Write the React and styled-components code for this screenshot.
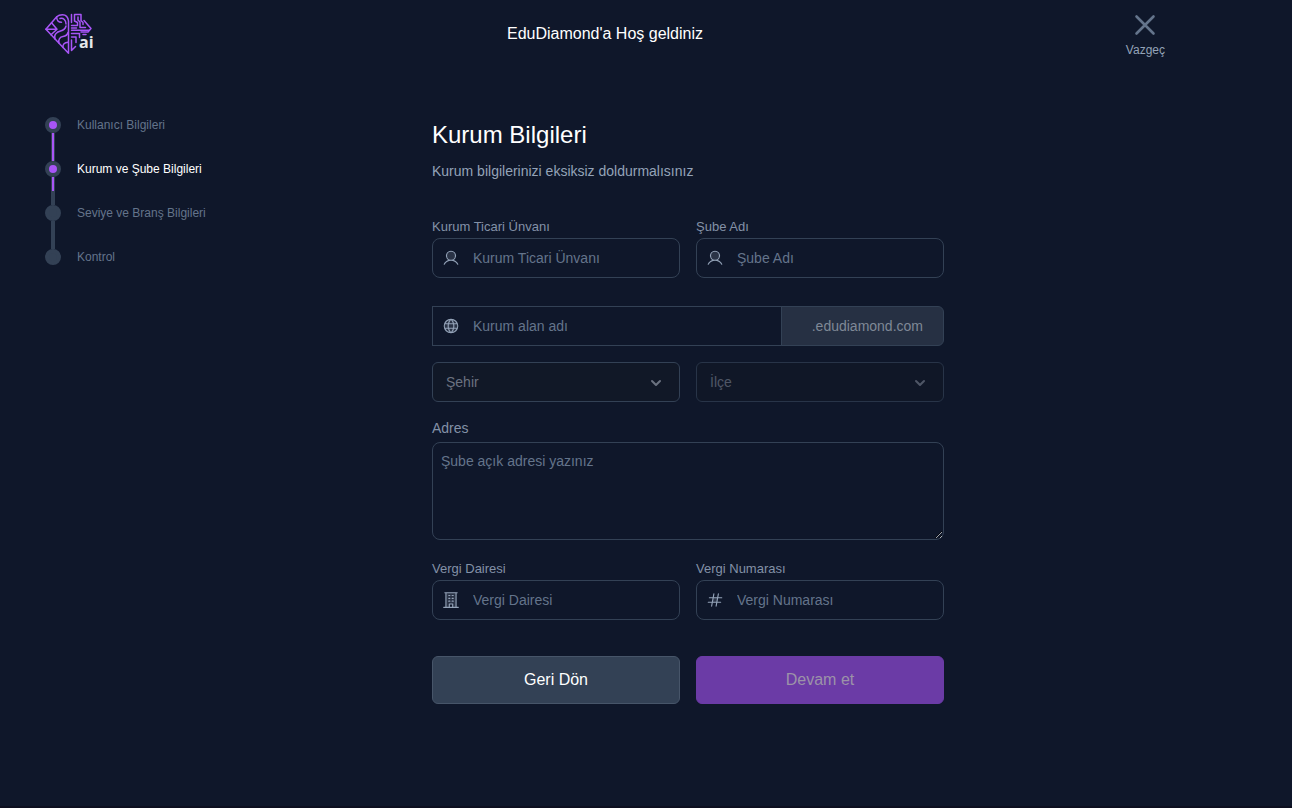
import React, { useState } from 'react'
import styled, { createGlobalStyle } from 'styled-components';
import { PiUserDuotone, PiGlobeDuotone, PiBuildingDuotone, PiHashDuotone } from 'react-icons/pi';
import { HiChevronDown } from 'react-icons/hi';


const steps = [
    { title: 'Kullanıcı Bilgileri', progress: 100, reached: true },
    { title: 'Kurum ve Şube Bilgileri', progress: 50, reached: true, current: true },
    { title: 'Seviye ve Branş Bilgileri', progress: 0 },
    { title: 'Kontrol' },
];

const Logo = () => (
    <LogoSvg viewBox="0 0 50 42" role="img" aria-label="EduDiamond ai">
        <g fill="none" stroke="#a855f7" strokeWidth="1.5" strokeLinejoin="round" strokeLinecap="round">
            {/* brain side */}
            <path d="M23.5 40.2V8C23 4 20.5 1.7 17.5 1.7C15 1.7 13 2.5 11.7 3.7L0.9 16.3L23.5 40.2" />
            <path d="M0.9 16.3H11.7M6.5 9.8L12 16.3L6 21.8M11.7 3.7C11.500 7.500 13.500 9.300 16.500 9.300M15 5.500C18.500 4.800 21 7 21 11" />
            <path d="M10 26C8.5 21.5 12 18.8 15.500 18C18.500 17.300 20.500 15.500 21 13M14 30C13 26.500 15 23.800 18 23.500C20.500 23.200 22.500 21.500 23 19.500M18 34.500C17.500 31.500 19.500 29.500 23 29.300" />
            {/* circuit side */}
            <path d="M26.5 1.5V9.5M26.5 12.5H32.5V9.5L29.5 8V1.5H36V7.5L38 9.5V11.5M33 4V7L35 9V14.500H40.500" />
            <path d="M39 7.5L46 15.5L43 19H36M26.5 15H31.5M26.5 17.3H44M26.5 20.5H34.5V24.5M38 21.5H41M26.5 24H31V29.5M26.5 27V37.5L30.5 33.5" />
        </g>
        <text x="34" y="35">ai</text>
    </LogoSvg>
)

const CloseIcon = () => (
    <svg viewBox="0 0 24 24" fill="none" stroke="currentColor" strokeWidth="2.6" strokeLinecap="round" aria-hidden="true">
        <path d="M3.500 3.500l17 17M20.500 3.500l-17 17" />
    </svg>
)

const Step = ({ step }) => (
    <StepItem aria-current={step.current ? 'step' : undefined}>
        <Track>
            <Dot $reached={step.reached} />
            {step.progress !== undefined && <Line><Progress style={{ height: `${step.progress}%` }} /></Line>}
        </Track>
        <StepTitle $current={step.current}>{step.title}</StepTitle>
    </StepItem>
)

const TextField = ({ id, label, icon: Icon, value, onChange }) => (
    <Field>
        <Label htmlFor={id}>{label}</Label>
        <InputBox>
            <Icon />
            <Input id={id} name={id} placeholder={label} value={value} onChange={onChange} />
        </InputBox>
    </Field>
)

const App = () => {
    const [form, setForm] = useState({ title: '', branch: '', domain: '', city: '', district: '', address: '', taxOffice: '', taxNumber: '' });

    const handleChange = (e) => {
        setForm({ ...form, [e.target.name]: e.target.value });
    }

    return (
        <>
            <GlobalStyle />
            <Page>
                <Header>
                    <Logo />
                    <Welcome>EduDiamond'a Hoş geldiniz</Welcome>
                    <CloseButton type="button">
                        <CloseIcon />
                        Vazgeç
                    </CloseButton>
                </Header>
                <Content>
                    <Steps>
                        {steps.map((step) => <Step key={step.title} step={step} />)}
                    </Steps>
                    <Form onSubmit={(e) => e.preventDefault()}>
                        <Heading>Kurum Bilgileri</Heading>
                        <Description>Kurum bilgilerinizi eksiksiz doldurmalısınız</Description>
                        <Row $space={28}>
                            <TextField id="title" label="Kurum Ticari Ünvanı" icon={PiUserDuotone} value={form.title} onChange={handleChange} />
                            <TextField id="branch" label="Şube Adı" icon={PiUserDuotone} value={form.branch} onChange={handleChange} />
                        </Row>
                        <DomainRow>
                            <InputBox $square>
                                <PiGlobeDuotone />
                                <Input name="domain" aria-label="Kurum alan adı" placeholder="Kurum alan adı" value={form.domain} onChange={handleChange} />
                            </InputBox>
                            <Suffix>.edudiamond.com</Suffix>
                        </DomainRow>
                        <Row $space={16}>
                            <SelectBox>
                                <Select name="city" aria-label="Şehir" value={form.city} onChange={handleChange}>
                                    <option value="">Şehir</option>
                                </Select>
                                <HiChevronDown />
                            </SelectBox>
                            <SelectBox $disabled>
                                <Select name="district" aria-label="İlçe" value={form.district} onChange={handleChange} disabled>
                                    <option value="">İlçe</option>
                                </Select>
                                <HiChevronDown />
                            </SelectBox>
                        </Row>
                        <AddressField>
                            <Label htmlFor="address" $large>Adres</Label>
                            <TextArea id="address" name="address" placeholder="Şube açık adresi yazınız" value={form.address} onChange={handleChange} />
                        </AddressField>
                        <Row $space={36}>
                            <TextField id="taxOffice" label="Vergi Dairesi" icon={PiBuildingDuotone} value={form.taxOffice} onChange={handleChange} />
                            <TextField id="taxNumber" label="Vergi Numarası" icon={PiHashDuotone} value={form.taxNumber} onChange={handleChange} />
                        </Row>
                        <Row>
                            <Button type="button">Geri Dön</Button>
                            <Button type="submit" $primary disabled>Devam et</Button>
                        </Row>
                    </Form>
                </Content>
            </Page>
        </>
    )
}

export default App;

const GlobalStyle = createGlobalStyle`
*{
    box-sizing: border-box;
}

body{
    margin: 0;
    background-color: #0f172a;
    font-family: "Liberation Sans", Arial, sans-serif;
}

button, input, select, textarea{
    font-family: inherit;
}
`;

const Page = styled.div`
min-height: 100vh;
padding: 0 127px 0 45px;
border-bottom: 2px solid #0d0f1f;
color: #94a3b8;
`;

const Header = styled.header`
display: grid;
grid-template-columns: 1fr auto 1fr;
align-items: start;
padding-top: 13px;
`;

const LogoSvg = styled.svg`
width: 50px;
height: 42px;

text{
    fill: #e5e7eb;
    font-family: "Open Sans", sans-serif;
    font-size: 16px;
    font-weight: 700;
}
`;

const Welcome = styled.div`
padding-top: 9px;
color: #fff;
font-size: 16px;
line-height: 24px;
`;

const CloseButton = styled.button`
justify-self: end;
display: flex;
flex-direction: column;
align-items: center;
gap: 4px;
padding: 0;
border: none;
background: none;
color: #94a3b8;
font-size: 12px;
line-height: 18px;
cursor: pointer;

svg{
    width: 24px;
    height: 24px;
    color: #64748b;
}
`;

const Content = styled.main`
display: grid;
grid-template-columns: 166px 1fr;
padding-top: 58px;
`;

const Steps = styled.ol`
margin: 0;
padding: 0;
list-style: none;
`;

const StepItem = styled.li`
display: flex;
gap: 16px;
`;

const Track = styled.div`
display: flex;
flex-direction: column;
align-items: center;
`;

const Dot = styled.span`
width: 16px;
height: 16px;
border: 4px solid #334155;
border-radius: 50%;
background-color: ${({ $reached }) => $reached ? '#a855f7' : '#334155'};
`;

const Line = styled.div`
width: 4px;
height: 28px;
padding: 0 1px;
background-color: #334155;
`;

const Progress = styled.div`
background-color: #a855f7;
`;

const StepTitle = styled.span`
color: ${({ $current }) => $current ? '#fff' : '#64748b'};
font-size: 12px;
line-height: 16px;
white-space: nowrap;
`;

const Form = styled.form`
justify-self: center;
width: 100%;
max-width: 512px;
padding-top: 2px;
`;

const Heading = styled.h1`
margin: 0 0 10px;
color: #fff;
font-size: 24px;
font-weight: 400;
line-height: 32px;
`;

const Description = styled.p`
margin: 0 0 37px;
font-size: 14px;
line-height: 20px;
`;

const Row = styled.div`
display: grid;
grid-template-columns: 1fr 1fr;
gap: 16px;
margin-bottom: ${({ $space }) => $space || 0}px;
`;

const Field = styled.div`
display: flex;
flex-direction: column;
gap: 2px;
`;

const AddressField = styled(Field)`
gap: 4px;
margin-bottom: 20px;
`;

const Label = styled.label`
color: #8391a7;
font-size: ${({ $large }) => $large ? 14 : 13}px;
line-height: ${({ $large }) => $large ? 20 : 18}px;
`;

const InputBox = styled.div`
display: flex;
align-items: center;
gap: 13px;
width: 100%;
min-width: 0;
height: 40px;
padding: 0 9px;
border: 1px solid #334155;
border-radius: ${({ $square }) => $square ? 0 : 8}px;

svg{
    flex-shrink: 0;
    width: 18px;
    height: 18px;
    color: #94a3b8;
}
`;

const Input = styled.input`
flex: 1;
min-width: 0;
padding: 0;
border: none;
outline: none;
background: none;
color: #e2e8f0;
font-size: 14px;
line-height: 20px;

&::placeholder{
    color: #64748b;
}
`;

const DomainRow = styled.div`
display: flex;
margin-bottom: 16px;
`;

const Suffix = styled.span`
display: flex;
flex-shrink: 0;
align-items: center;
justify-content: flex-end;
width: 163px;
margin-left: -1px;
padding-right: 20px;
border: 1px solid #334155;
border-radius: 0 6px 6px 0;
background-color: #263043;
color: #7f8896;
font-size: 14px;
`;

const SelectBox = styled.div`
position: relative;
color: #6b7280;
opacity: ${({ $disabled }) => $disabled ? 0.7 : 1};

svg{
    position: absolute;
    top: 11px;
    right: 14px;
    width: 20px;
    height: 20px;
    pointer-events: none;
}
`;

const Select = styled.select`
width: 100%;
height: 40px;
padding: 0 36px 0 13px;
border: 1px solid #334155;
border-radius: 6px;
appearance: none;
background-color: #111827;
color: inherit;
font-size: 14px;
opacity: 1;
`;

const TextArea = styled.textarea`
width: 100%;
height: 98px;
padding: 8px;
border: 1px solid #334155;
border-radius: 8px;
outline: none;
background: none;
color: #e2e8f0;
font-size: 14px;
line-height: 20px;
resize: vertical;

&::placeholder{
    color: #64748b;
}
`;

const Button = styled.button`
height: 48px;
border: 1px solid ${({ $primary }) => $primary ? '#6b3ba6' : '#475569'};
border-radius: 6px;
background-color: ${({ $primary }) => $primary ? '#6b3ba6' : '#334155'};
color: ${({ $primary }) => $primary ? '#9c93a8' : '#fff'};
font-size: 16px;
`;
